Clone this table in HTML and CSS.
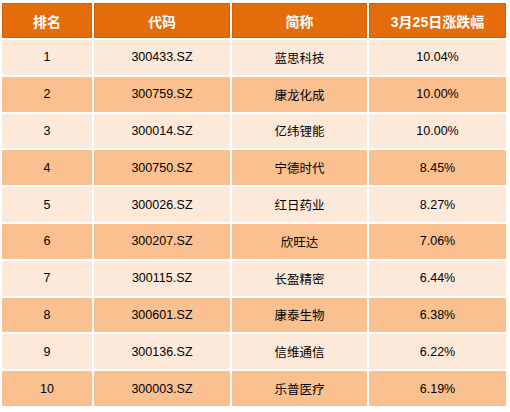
FILE: index.html
```html
<!DOCTYPE html>
<html lang="zh-CN">
  <head>
    <meta charset="UTF-8" />
    <meta name="viewport" content="width=device-width, initial-scale=1.0" />
    <title>3月25日涨跌幅</title>
    <link rel="stylesheet" href="styles.css">
  </head>
  <body>
    <table class="rank-table">
      <thead>
        <tr>
          <th class="col-rank">排名</th>
          <th class="col-code">代码</th>
          <th class="col-name">简称</th>
          <th class="col-change">3月25日涨跌幅</th>
        </tr>
      </thead>
      <tbody>
        <tr class="row-light"><td>1</td><td>300433.SZ</td><td>蓝思科技</td><td>10.04%</td></tr>
        <tr class="row-dark"><td>2</td><td>300759.SZ</td><td>康龙化成</td><td>10.00%</td></tr>
        <tr class="row-light"><td>3</td><td>300014.SZ</td><td>亿纬锂能</td><td>10.00%</td></tr>
        <tr class="row-dark"><td>4</td><td>300750.SZ</td><td>宁德时代</td><td>8.45%</td></tr>
        <tr class="row-light"><td>5</td><td>300026.SZ</td><td>红日药业</td><td>8.27%</td></tr>
        <tr class="row-dark"><td>6</td><td>300207.SZ</td><td>欣旺达</td><td>7.06%</td></tr>
        <tr class="row-light"><td>7</td><td>300115.SZ</td><td>长盈精密</td><td>6.44%</td></tr>
        <tr class="row-dark"><td>8</td><td>300601.SZ</td><td>康泰生物</td><td>6.38%</td></tr>
        <tr class="row-light"><td>9</td><td>300136.SZ</td><td>信维通信</td><td>6.22%</td></tr>
        <tr class="row-dark"><td>10</td><td>300003.SZ</td><td>乐普医疗</td><td>6.19%</td></tr>
      </tbody>
    </table>
  </body>
</html>
```

FILE: styles.css
```css
body {
  margin: 0;
  background-color: #ffffff;
  font-family: "Liberation Sans", Arial, "Noto Sans CJK SC", sans-serif;
  color: #000000;
}

.rank-table {
  margin: 1px 0 0 0;
  border-collapse: separate;
  border-spacing: 2px;
  table-layout: fixed;
  width: 508px;
}

.rank-table th {
  height: 35px;
  padding: 0;
  box-sizing: border-box;
  background-color: #e46c0a;
  border: 1px solid #d55f05;
  color: #ffffff;
  font-size: 14px;
  font-weight: bold;
  text-align: center;
}

.rank-table td {
  height: 34.8px;
  padding: 0;
  font-size: 12.5px;
  text-align: center;
}

.col-rank {
  width: 90px;
}

.col-code {
  width: 136px;
}

.col-name {
  width: 135px;
}

.row-light td {
  background-color: #fde9d9;
}

.row-dark td {
  background-color: #fac090;
}
```
